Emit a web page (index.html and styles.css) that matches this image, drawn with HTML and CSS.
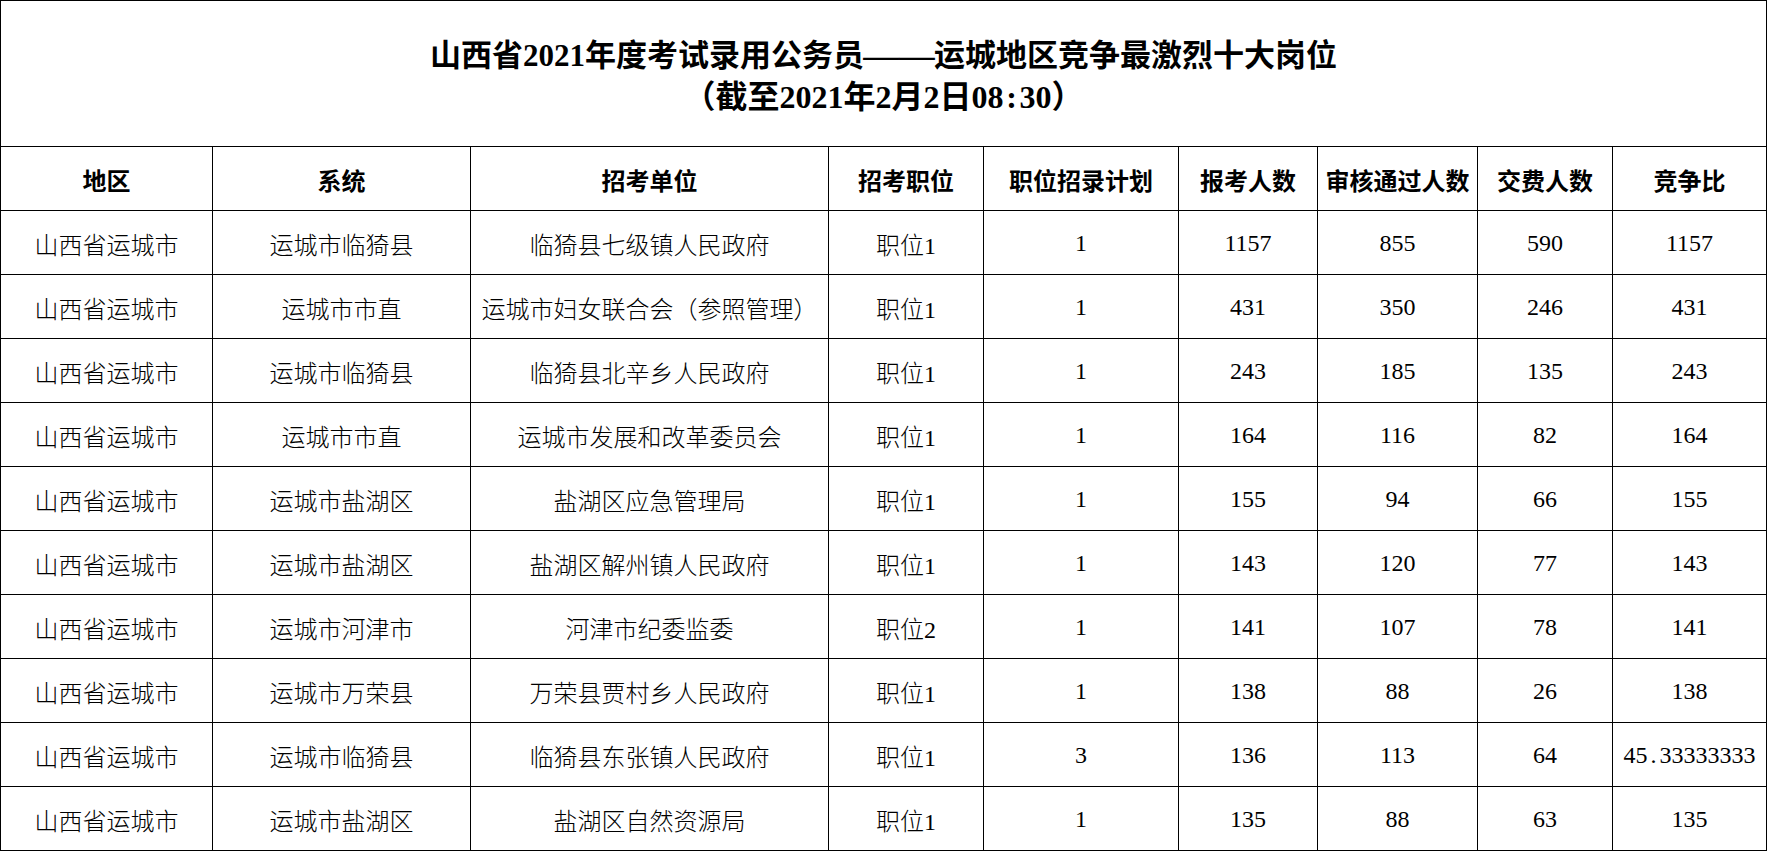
FILE: index.html
```html
<!DOCTYPE html>
<html lang="zh-CN">
<head>
<meta charset="utf-8">
<title>山西省2021年度考试录用公务员——运城地区竞争最激烈十大岗位</title>
<link rel="stylesheet" href="styles.css">
</head>
<body>
<table class="sheet">
  <colgroup>
    <col class="c-region">
    <col class="c-system">
    <col class="c-unit">
    <col class="c-post">
    <col class="c-plan">
    <col class="c-apply">
    <col class="c-pass">
    <col class="c-paid">
    <col class="c-ratio">
  </colgroup>
  <thead>
    <tr class="title-row">
      <th colspan="9" class="title"><span class="title-main">山西省2021年度考试录用公务员<span class="dash">——</span>运城地区竞争最激烈十大岗位</span><br><span class="title-sub">（截至2021年2月2日08<span class="wide">:</span>30）</span></th>
    </tr>
    <tr class="head-row">
      <th>地区</th>
      <th>系统</th>
      <th>招考单位</th>
      <th>招考职位</th>
      <th>职位招录计划</th>
      <th>报考人数</th>
      <th>审核通过人数</th>
      <th>交费人数</th>
      <th>竞争比</th>
    </tr>
  </thead>
  <tbody>
    <tr><td>山西省运城市</td><td>运城市临猗县</td><td>临猗县七级镇人民政府</td><td>职位1</td><td>1</td><td>1157</td><td>855</td><td>590</td><td>1157</td></tr>
    <tr><td>山西省运城市</td><td>运城市市直</td><td>运城市妇女联合会（参照管理）</td><td>职位1</td><td>1</td><td>431</td><td>350</td><td>246</td><td>431</td></tr>
    <tr><td>山西省运城市</td><td>运城市临猗县</td><td>临猗县北辛乡人民政府</td><td>职位1</td><td>1</td><td>243</td><td>185</td><td>135</td><td>243</td></tr>
    <tr><td>山西省运城市</td><td>运城市市直</td><td>运城市发展和改革委员会</td><td>职位1</td><td>1</td><td>164</td><td>116</td><td>82</td><td>164</td></tr>
    <tr><td>山西省运城市</td><td>运城市盐湖区</td><td>盐湖区应急管理局</td><td>职位1</td><td>1</td><td>155</td><td>94</td><td>66</td><td>155</td></tr>
    <tr><td>山西省运城市</td><td>运城市盐湖区</td><td>盐湖区解州镇人民政府</td><td>职位1</td><td>1</td><td>143</td><td>120</td><td>77</td><td>143</td></tr>
    <tr><td>山西省运城市</td><td>运城市河津市</td><td>河津市纪委监委</td><td>职位2</td><td>1</td><td>141</td><td>107</td><td>78</td><td>141</td></tr>
    <tr><td>山西省运城市</td><td>运城市万荣县</td><td>万荣县贾村乡人民政府</td><td>职位1</td><td>1</td><td>138</td><td>88</td><td>26</td><td>138</td></tr>
    <tr><td>山西省运城市</td><td>运城市临猗县</td><td>临猗县东张镇人民政府</td><td>职位1</td><td>3</td><td>136</td><td>113</td><td>64</td><td>45<span class="wide">.</span>33333333</td></tr>
    <tr><td>山西省运城市</td><td>运城市盐湖区</td><td>盐湖区自然资源局</td><td>职位1</td><td>1</td><td>135</td><td>88</td><td>63</td><td>135</td></tr>
  </tbody>
</table>
</body>
</html>
```
FILE: styles.css
```css
html, body {
  margin: 0;
  padding: 0;
  background: #ffffff;
}

body {
  font-family: "Liberation Serif", "Noto Sans CJK SC", serif;
  color: #000000;
}

.sheet {
  border-collapse: collapse;
  table-layout: fixed;
  width: 1766px;
}

.c-region { width: 212px; }
.c-system { width: 258px; }
.c-unit   { width: 358px; }
.c-post   { width: 155px; }
.c-plan   { width: 195px; }
.c-apply  { width: 139px; }
.c-pass   { width: 160px; }
.c-paid   { width: 135px; }
.c-ratio  { width: 154px; }

.sheet th,
.sheet td {
  border: 1px solid #000000;
  padding: 2px 0 0 0;
  text-align: center;
  vertical-align: middle;
  white-space: nowrap;
  font-size: 24px;
  height: 64px;
  box-sizing: border-box;
}

.sheet td {
  font-weight: 300;
}

.sheet th {
  font-weight: 700;
}

.sheet .title {
  height: 146px;
  line-height: 39px;
  padding-top: 8px;
}

.title-main {
  font-size: 31px;
}

.title-sub {
  font-size: 32px;
}

.dash {
  display: inline-block;
  transform: scaleX(1.15);
  margin: 0 4px;
}

.wide {
  display: inline-block;
  width: 0.5em;
  text-align: center;
}
```
